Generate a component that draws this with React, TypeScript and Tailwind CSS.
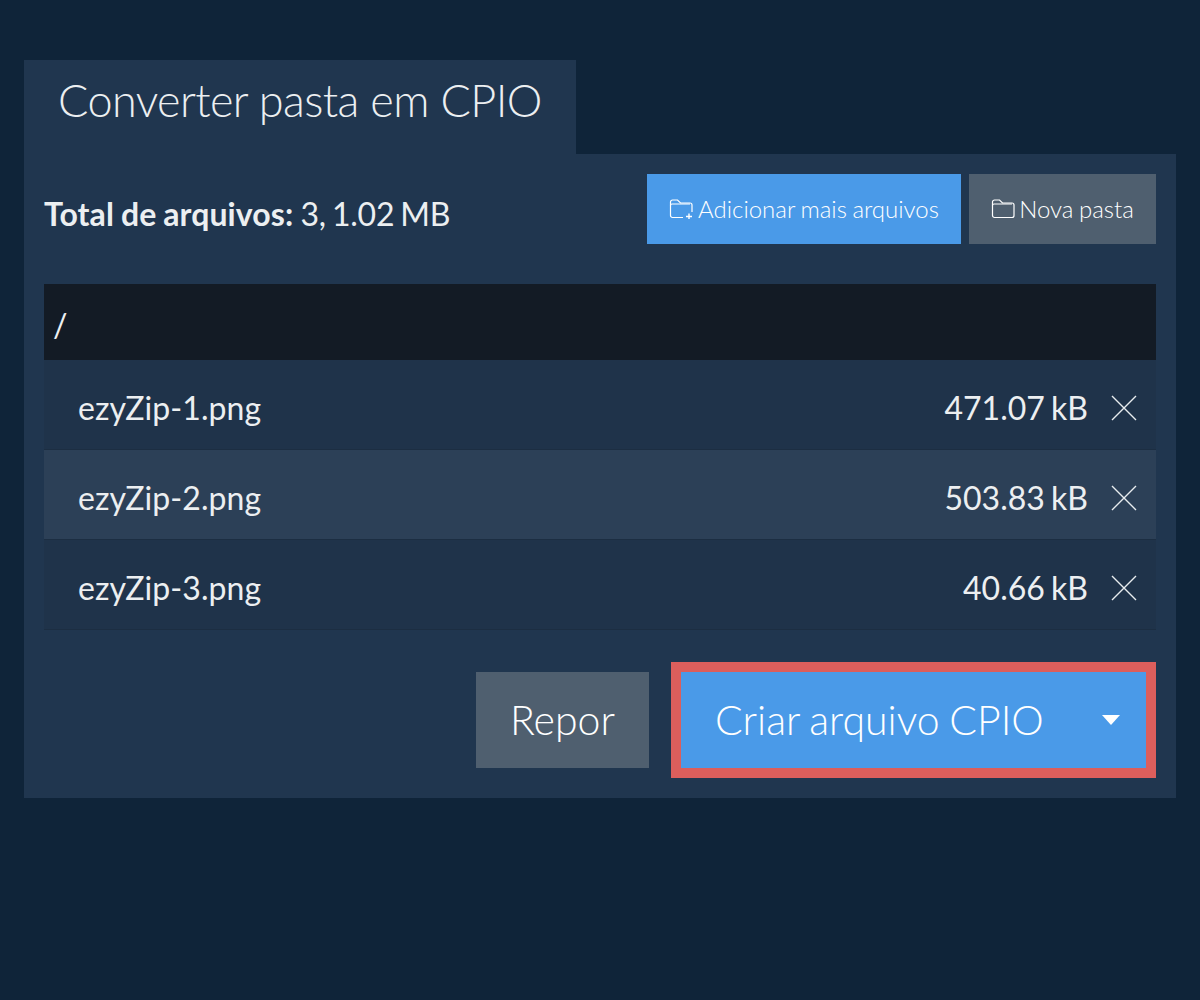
import React from "react";

function FolderPlus() {
  return (
    <svg width="25" height="22" viewBox="0 0 25 22" fill="none" stroke="currentColor" strokeWidth="1.2" className="shrink-0">
      <path d="M14 19.5H3.5A2 2 0 0 1 1.5 17.5V4A2 2 0 0 1 3.5 2H8.5L11.5 5H21A2 2 0 0 1 23 7V14" />
      <path d="M1.5 7.5A1.5 1.5 0 0 1 3 6H21" />
      <path d="M20 15.5V21M17 18.5H23" strokeWidth="1.4" />
    </svg>
  );
}

function Folder() {
  return (
    <svg width="24" height="22" viewBox="0 0 24 22" fill="none" stroke="currentColor" strokeWidth="1.2" className="shrink-0">
      <path d="M3.5 19.5A2 2 0 0 1 1.5 17.5V4A2 2 0 0 1 3.5 2H8.5L11.5 5H21A2 2 0 0 1 23 7V17.5A2 2 0 0 1 21 19.5Z" />
      <path d="M1.5 7.5A1.5 1.5 0 0 1 3 6H21" />
    </svg>
  );
}

function Close() {
  return (
    <svg width="26" height="26" viewBox="0 0 26 26" fill="none" stroke="#e8ecef" strokeWidth="1.4" className="mt-[6px] shrink-0">
      <path d="M1 1L25 25M25 1L1 25" />
    </svg>
  );
}

const rows = [
  { name: "ezyZip-1.png", size: "471.07 kB", bg: "bg-[#1f334a]" },
  { name: "ezyZip-2.png", size: "503.83 kB", bg: "bg-[#2c4057]" },
  { name: "ezyZip-3.png", size: "40.66 kB", bg: "bg-[#1f334a]" },
];

export default function App() {
  return (
    <div className="min-h-[1000px] bg-[#0f2439] px-6 pt-[60px] font-['Lato',sans-serif] text-[#eceff1]">
      <div className="flex h-[94px] w-[552px] items-start bg-[#20364f] pl-[34px] pt-[13px] text-[45px] font-light leading-[54px] tracking-[-0.6px]">
        Converter pasta em CPIO
      </div>
      <div className="flex h-[644px] flex-col bg-[#20364f] px-5 pt-5">
        <div className="flex h-[70px] items-center justify-between">
          <div className="pt-[10px] text-[32px] leading-[40px] [word-spacing:-1px]">
            <b className="font-bold tracking-[0.1px]">Total de arquivos:</b>{" "}
            <span className="tracking-[-0.2px] [word-spacing:-2px]">3, 1.02 MB</span>
          </div>
          <div className="flex gap-2">
            <div className="flex h-[70px] w-[314px] items-center justify-center gap-1 bg-[#4a9ae8] text-[24px] font-light text-white [word-spacing:-1px]">
              <FolderPlus />
              Adicionar mais arquivos
            </div>
            <div className="flex h-[70px] w-[187px] items-center justify-center gap-1 bg-[#4f5f6f] text-[24px] font-light text-white [word-spacing:-1px]">
              <Folder />
              Nova pasta
            </div>
          </div>
        </div>
        <div className="mt-10 flex h-[76px] items-center bg-[#131b25] pl-[9px] pt-[6px] text-[32px]">/</div>
        {rows.map((r) => (
          <div
            key={r.name}
            className={`flex h-[90px] items-center border-b border-[#1c2e42] pl-[34px] pr-[19px] text-[32px] ${r.bg}`}
          >
            <span className="flex-1 pt-[6px] tracking-[0.08px]">{r.name}</span>
            <span className="mr-[23px] pt-[6px] [word-spacing:-2px]">{r.size}</span>
            <Close />
          </div>
        ))}
        <div className="mt-[32px] flex justify-end gap-[22px]">
          <div className="mt-[10px] flex h-[96px] w-[173px] items-center justify-center bg-[#4f5f6f] text-[41px] font-light text-white">
            Repor
          </div>
          <div className="flex h-[116px] w-[485px] items-center border-[10px] border-[#dc5e5c] bg-[#4a9ae8] pl-[34px] pr-[26px] text-[41px] font-light text-white">
            <span className="flex-1 [word-spacing:-1.5px]">Criar arquivo CPIO</span>
            <span className="h-0 w-0 border-x-[9px] border-t-[10px] border-x-transparent border-t-white" />
          </div>
        </div>
      </div>
    </div>
  );
}
